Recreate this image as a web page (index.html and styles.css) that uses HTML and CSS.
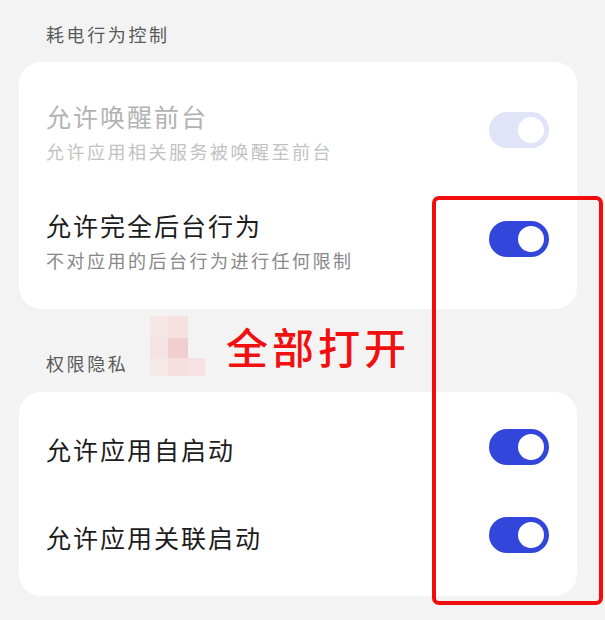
FILE: index.html
```html
<html>

<head>
  <title>耗电行为控制</title>
  <link rel="stylesheet" href="styles.css">
</head>

<body>
  <div class="page">
    <h4 class="section-title">耗电行为控制</h4>
    <div class="card card-power">
      <div class="row disabled">
        <div class="text">
          <div class="title">允许唤醒前台</div>
          <div class="sub">允许应用相关服务被唤醒至前台</div>
        </div>
        <div class="toggle off-disabled"><span class="knob"></span></div>
      </div>
      <div class="row">
        <div class="text">
          <div class="title">允许完全后台行为</div>
          <div class="sub">不对应用的后台行为进行任何限制</div>
        </div>
        <div class="toggle on"><span class="knob"></span></div>
      </div>
    </div>

    <h4 class="section-title second">权限隐私</h4>
    <div class="card card-privacy">
      <div class="row single">
        <div class="title">允许应用自启动</div>
        <div class="toggle on"><span class="knob"></span></div>
      </div>
      <div class="row single">
        <div class="title">允许应用关联启动</div>
        <div class="toggle on"><span class="knob"></span></div>
      </div>
    </div>
  </div>

  <!-- annotation layer -->
  <div class="mosaic">
    <span></span><span></span><span></span>
    <span></span><span></span><span></span>
    <span></span><span></span><span></span>
  </div>
  <div class="note">全部打开</div>
  <div class="highlight"></div>
</body>

</html>
```

FILE: styles.css
```css
body {
  margin: 0;
  background: #f3f3f3;
  font-family: "Noto Sans CJK SC", "Noto Sans", sans-serif;
  position: relative;
  height: 620px;
  overflow: hidden;
}

.page {
  padding: 20px 28px 0 19px;
}

.section-title {
  margin: 0;
  padding-left: 27px;
  font-size: 18px;
  line-height: 28px;
  font-weight: 400;
  letter-spacing: 2.6px;
  color: #5a5a5a;
}

.section-title.second {
  margin-top: 40px;
}

.card {
  background: #fff;
  border-radius: 22px;
  margin-top: 14px;
  padding: 15px 28px 14px 27px;
}

.card-privacy {
  margin-top: 15px;
  padding: 13px 28px 15px 27px;
}

.row {
  display: flex;
  align-items: center;
  justify-content: space-between;
  padding: 22px 0;
}

.row.single {
  padding: 27px 0;
}

.title {
  font-size: 25px;
  line-height: 34px;
  letter-spacing: 2px;
  color: #1c1c1c;
}

.sub {
  margin-top: 5px;
  font-size: 18px;
  line-height: 26px;
  letter-spacing: 2.5px;
  color: #888;
}

.row.disabled .title {
  color: #b3b3b3;
}

.row.disabled .sub {
  color: #c2c2c2;
}

.toggle {
  width: 60px;
  height: 36px;
  border-radius: 18px;
  background: #3246dc;
  position: relative;
  flex: none;
  margin-top: -4px;
}

.toggle.off-disabled {
  background: #e1e4f8;
}

.knob {
  position: absolute;
  right: 5px;
  top: 5px;
  width: 26px;
  height: 26px;
  border-radius: 50%;
  background: #fff;
}

.highlight {
  position: absolute;
  left: 432px;
  top: 196px;
  width: 163px;
  height: 401px;
  border: 4px solid #f20d0d;
  border-radius: 7px;
}

.note {
  position: absolute;
  left: 226px;
  top: 318px;
  font-size: 42px;
  line-height: 56px;
  font-weight: 500;
  letter-spacing: 4px;
  color: #f01010;
}

.mosaic {
  position: absolute;
  left: 150px;
  top: 316px;
  display: grid;
  grid-template-columns: 18px 20px 17px;
  grid-template-rows: 22px 20px 18px;
}

.mosaic span:nth-child(1) { background: #f6e6e6; }
.mosaic span:nth-child(2) { background: #f6e0e0; }
.mosaic span:nth-child(3) { background: #f3f3f3; }
.mosaic span:nth-child(4) { background: #f6e4e4; }
.mosaic span:nth-child(5) { background: #f2cfcf; }
.mosaic span:nth-child(6) { background: #f3f3f3; }
.mosaic span:nth-child(7) { background: #f7e8e8; }
.mosaic span:nth-child(8) { background: #f4dede; }
.mosaic span:nth-child(9) { background: #f6e2e2; }
```
